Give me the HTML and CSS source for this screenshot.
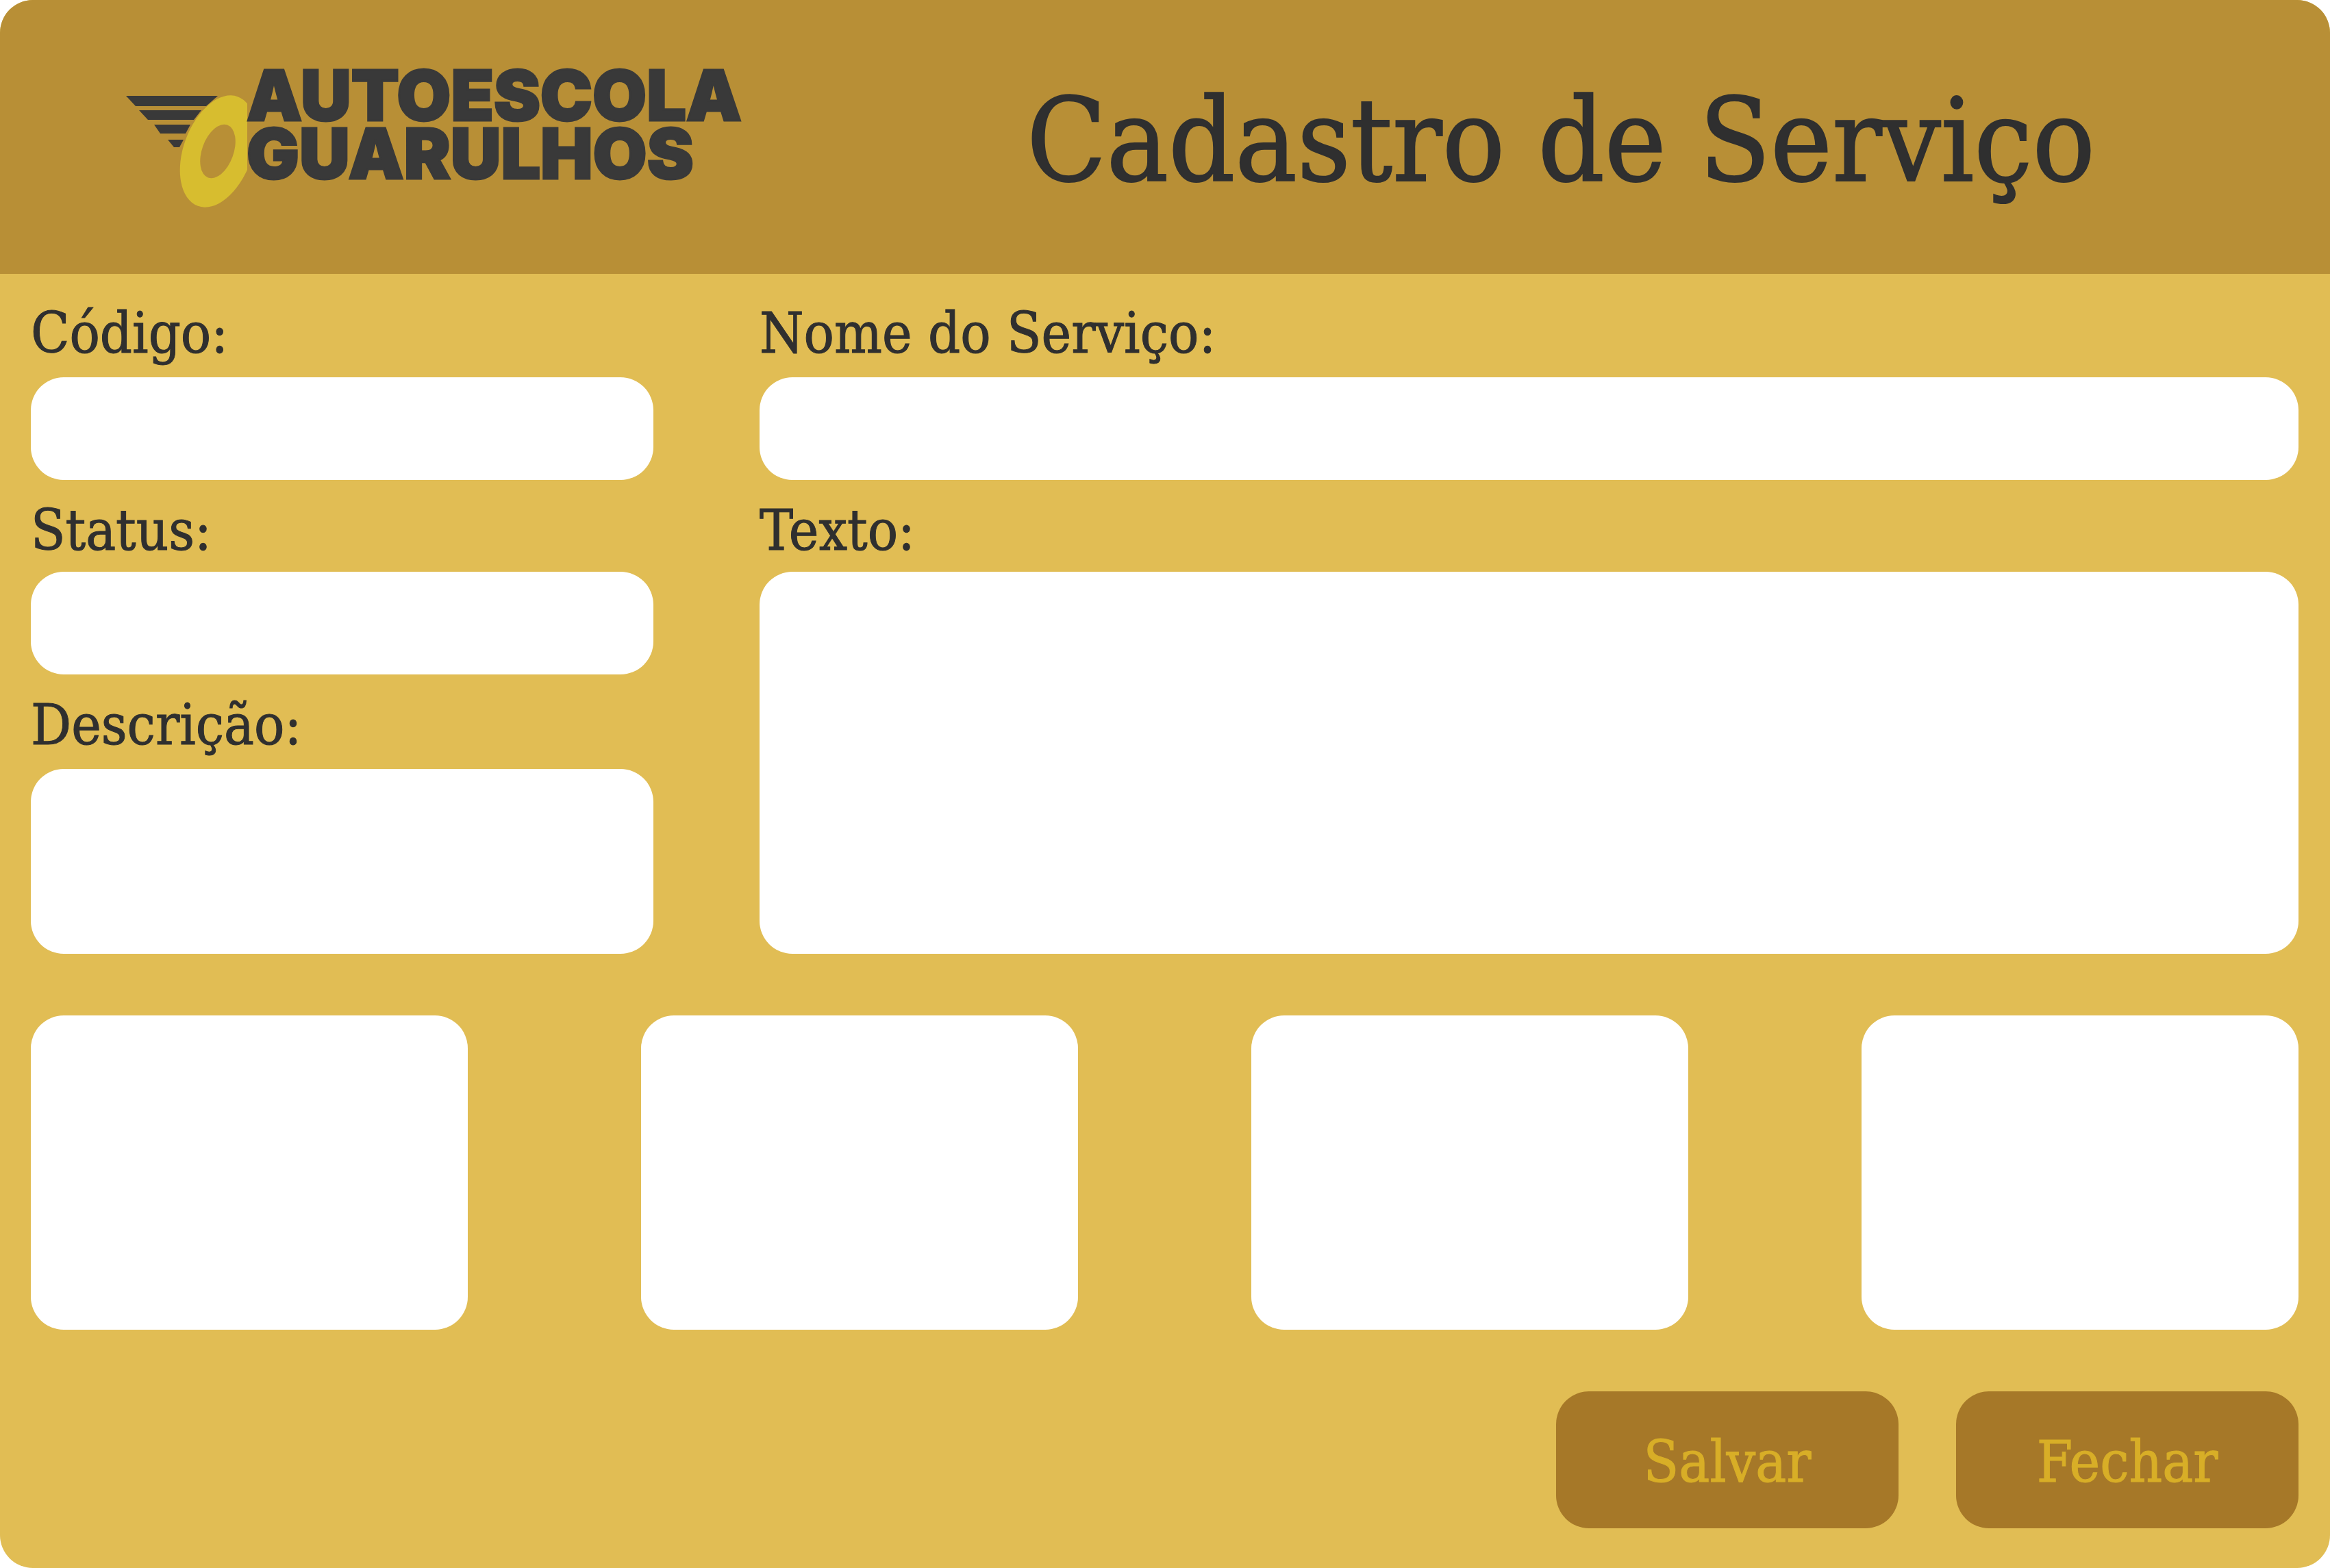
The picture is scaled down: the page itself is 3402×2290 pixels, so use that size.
FILE: index.html
```html
<!DOCTYPE html>
<html lang="pt-BR">
<head>
  <meta charset="utf-8">
  <meta name="viewport" content="width=device-width, initial-scale=1">
  <title>Cadastro de Serviço</title>
  <link rel="stylesheet" href="styles.css">
</head>
<body>
  <main class="window">
    <header class="header">
      <svg class="logo" viewBox="180 50 910 300" role="img" aria-label="Autoescola Guarulhos">
        <clipPath id="ring-edge">
          <path d="M180 50H361V350H180Z"/>
        </clipPath>
        <g class="logo-dark">
          <path d="M184 140H318L301 155H198Z"/>
          <path d="M203 161H294L283 175H216Z"/>
          <path d="M225 182H278L271 195H234Z"/>
          <path d="M245 204H268L262 215H254Z"/>
        </g>
        <g clip-path="url(#ring-edge)">
          <path class="logo-ring" fill-rule="evenodd" transform="translate(318 221) rotate(20)" d="M0-85A50 85 0 0 1 0 85A50 85 0 0 1 0-85ZM0-41A23 41 0 0 0 0 41A23 41 0 0 0 0-41Z"/>
        </g>
        <text class="logo-text" x="360" y="176">AUTOESCOLA</text>
        <text class="logo-text" x="360" y="261">GUARULHOS</text>
      </svg>
      <h1 class="title">Cadastro de Serviço</h1>
    </header>

    <form class="form">
      <div class="fields">
        <div class="column">
          <div class="field">
            <label class="label" for="codigo">Código:</label>
            <input class="control" id="codigo" type="text">
          </div>
          <div class="field field-tight">
            <label class="label" for="status">Status:</label>
            <input class="control" id="status" type="text">
          </div>
          <div class="field">
            <label class="label" for="descricao">Descrição:</label>
            <textarea class="control control-medium" id="descricao"></textarea>
          </div>
        </div>
        <div class="column">
          <div class="field">
            <label class="label" for="nome">Nome do Serviço:</label>
            <input class="control" id="nome" type="text">
          </div>
          <div class="field field-tight field-fill">
            <label class="label" for="texto">Texto:</label>
            <textarea class="control control-fill" id="texto"></textarea>
          </div>
        </div>
      </div>

      <div class="tiles">
        <div class="tile"></div>
        <div class="tile"></div>
        <div class="tile"></div>
        <div class="tile"></div>
      </div>

      <div class="actions">
        <button class="button" type="submit">Salvar</button>
        <button class="button" type="button">Fechar</button>
      </div>
    </form>
  </main>
</body>
</html>
```
FILE: styles.css
```css
* {
  box-sizing: border-box;
}

body {
  margin: 0;
  background: #fff;
  color: #2f2f2f;
  font-family: "DejaVu Serif Condensed", "DejaVu Serif", serif;
}

.window {
  min-height: 100vh;
  overflow: hidden;
  border-radius: 48px;
  background: #e1bd54;
}

.header {
  display: flex;
  align-items: center;
  gap: 66px;
  height: 400px;
  padding-left: 180px;
  background: #b88f36;
}

.logo {
  flex: none;
  width: 910px;
  height: 300px;
}

.logo-dark,
.logo-text {
  fill: #393939;
}

.logo-ring {
  fill: #d7bd2f;
}

.logo-text {
  font-family: Inter, sans-serif;
  font-size: 102px;
  font-weight: 900;
  stroke: #393939;
  stroke-width: 3px;
}

.title {
  flex: 1;
  margin: 0;
  padding-top: 12px;
  font-size: 169px;
  font-weight: 400;
  line-height: 200px;
  text-align: center;
  -webkit-text-stroke: 2px currentColor;
}

.form {
  padding: 47px 46px 58px 45px;
}

.fields {
  display: grid;
  grid-template-columns: 909fr 2247fr;
  column-gap: 155px;
}

.column {
  display: flex;
  flex-direction: column;
  gap: 34px;
  min-width: 0;
}

.field {
  display: flex;
  flex-direction: column;
  gap: 24px;
}

.field-tight {
  gap: 20px;
}

.field-fill {
  flex: 1;
}

.label {
  font-size: 82px;
  line-height: 80px;
  -webkit-text-stroke: 1px currentColor;
}

.control {
  display: block;
  width: 100%;
  height: 150px;
  padding: 24px 48px;
  border: 0;
  border-radius: 48px;
  background: #fff;
  color: inherit;
  font: inherit;
  font-size: 82px;
  resize: none;
}

.control-medium {
  height: 270px;
}

.control-fill {
  flex: 1;
}

.tiles {
  display: grid;
  grid-template-columns: repeat(4, 638fr);
  gap: 253px;
  margin-top: 90px;
}

.tile {
  height: 459px;
  border-radius: 48px;
  background: #fff;
}

.actions {
  display: flex;
  justify-content: flex-end;
  gap: 84px;
  margin-top: 90px;
}

.button {
  width: 500px;
  height: 200px;
  padding: 6px 0 0;
  border: 0;
  border-radius: 48px;
  background: #a67828;
  color: #d8ae27;
  font-family: inherit;
  font-size: 84px;
  line-height: 96px;
  -webkit-text-stroke: 1px currentColor;
}
```
